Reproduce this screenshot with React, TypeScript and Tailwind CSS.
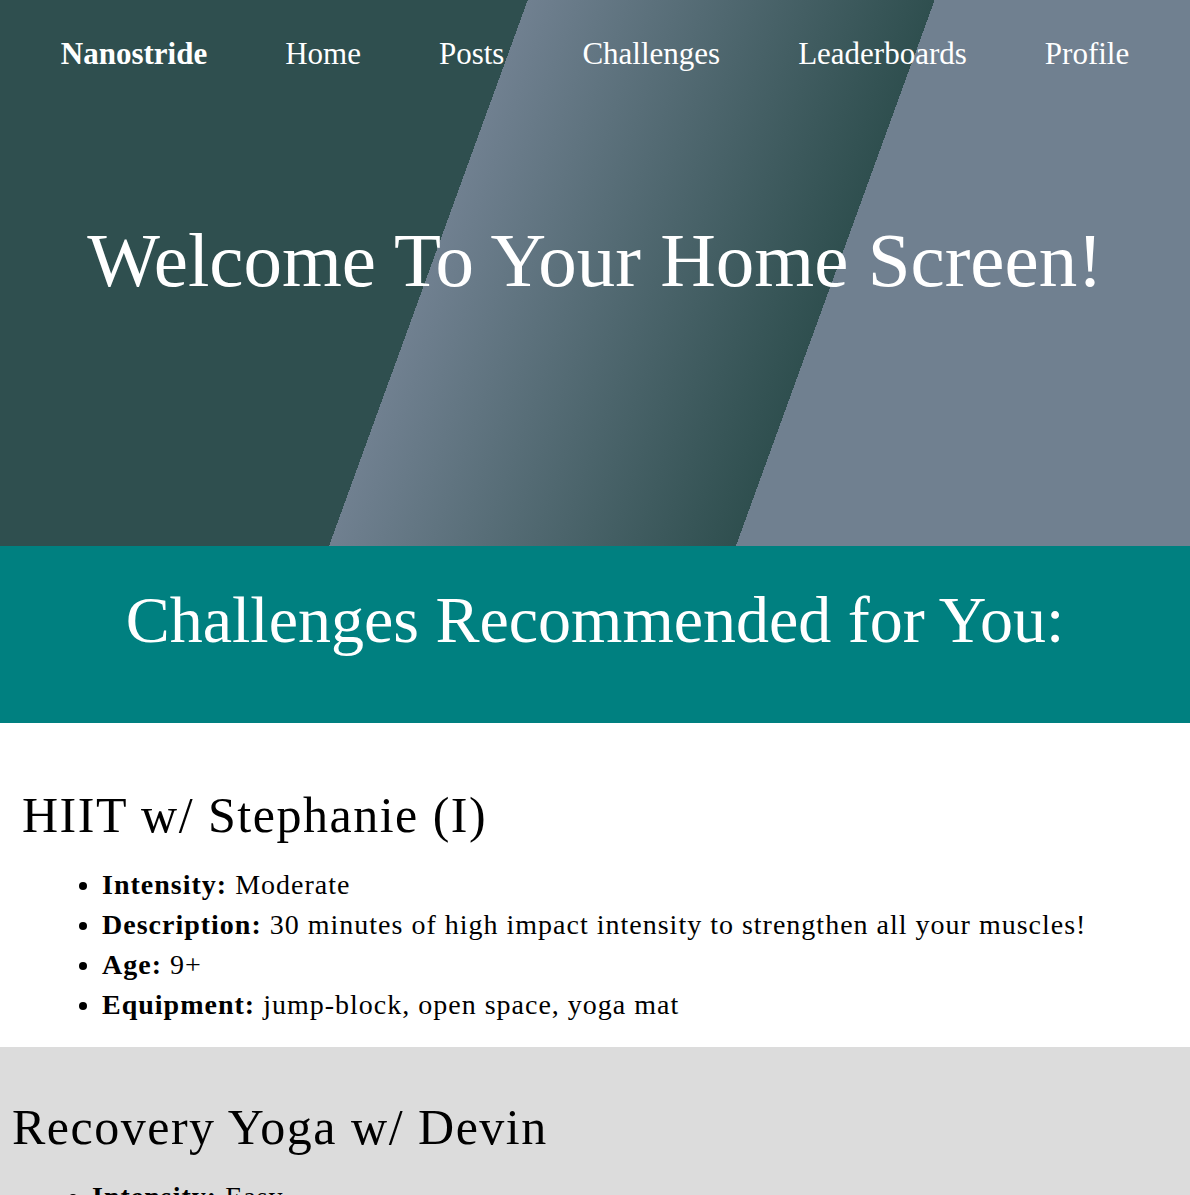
const navItems = ["Home", "Posts", "Challenges", "Leaderboards", "Profile"]

const challenges = [
  {
    title: "HIIT w/ Stephanie (I)",
    intensity: "Moderate",
    description: "30 minutes of high impact intensity to strengthen all your muscles!",
    age: "9+",
    equipment: "jump-block, open space, yoga mat",
  },
  {
    title: "Recovery Yoga w/ Devin",
    intensity: "Easy",
    description: "45 minutes of gentle stretching to help your body recover.",
    age: "All ages",
    equipment: "yoga mat",
  },
]

export default function App() {
  return (
    <div className="w-full font-['Palatino_Linotype','Book_Antiqua',Palatino,'Liberation_Serif',serif]">
      <header className="h-[546px] w-full bg-[linear-gradient(110deg,#2f4f4f_38%,#708090_38%,#2f4f4f_67.3%,#708090_67.3%)] text-white">
        <nav className="flex justify-center pt-[32px]">
          <a className="px-[39px] text-[31px] font-bold leading-[44px]">Nanostride</a>
          {navItems.map((item) => (
            <a key={item} className="px-[39px] text-[31px] leading-[44px]">
              {item}
            </a>
          ))}
        </nav>
        <div className="mt-[134px] flex justify-center">
          <h1 className="text-[77px] leading-[100px]">Welcome To Your Home Screen!</h1>
        </div>
      </header>

      <section className="flex h-[177px] items-center justify-center bg-[#008080] pb-[30px] text-white">
        <h1 className="text-[66px] leading-[80px]">Challenges Recommended for You:</h1>
      </section>

      {challenges.map((c, i) => (
        <div key={c.title} className={i % 2 === 0 ? "bg-white pt-[60px] pb-[22px]" : "bg-[#dcdcdc] pt-[48px] pb-[20px]"}>
          <h2
            className={`text-[50px] leading-[64px] tracking-[1.5px] ${i % 2 === 0 ? "pl-[22px]" : "pl-[12px]"}`}
          >
            {c.title}
          </h2>
          <ul
            className={`mt-[18px] list-disc text-[28px] leading-[40px] tracking-[1px] ${
              i % 2 === 0 ? "pl-[102px]" : "pl-[92px]"
            }`}
          >
            <li>
              <b>Intensity:</b> {c.intensity}
            </li>
            <li>
              <b>Description:</b> {c.description}
            </li>
            <li>
              <b>Age:</b> {c.age}
            </li>
            <li>
              <b>Equipment:</b> {c.equipment}
            </li>
          </ul>
        </div>
      ))}
    </div>
  )
}
